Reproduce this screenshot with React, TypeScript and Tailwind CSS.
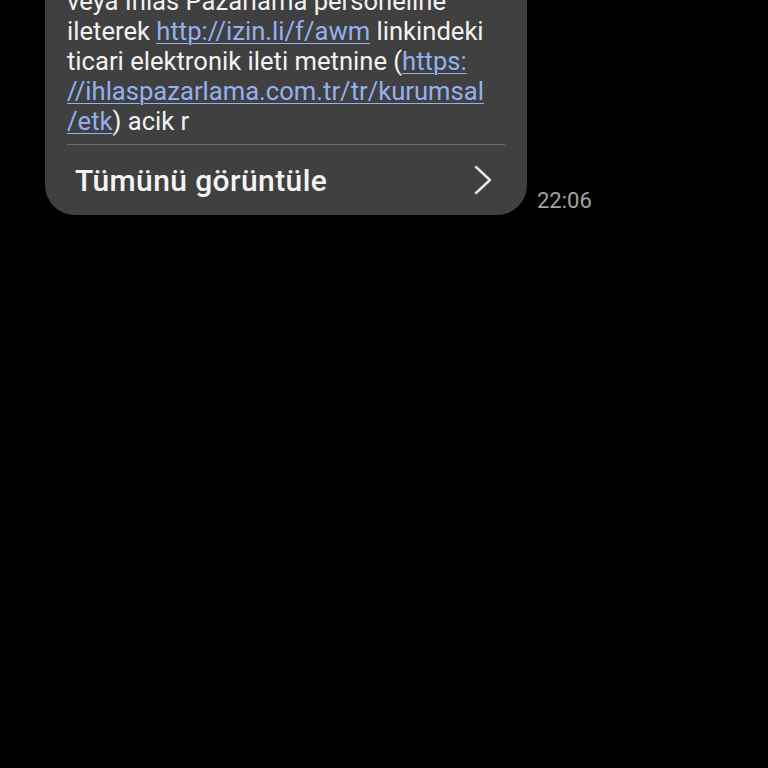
const link = 'text-[#93b1ee] underline decoration-1 underline-offset-[3px]'

export default function App() {
  return (
    <div className="h-[768px] w-[768px] overflow-hidden bg-black font-['Roboto',sans-serif]">
      <div className="flex items-end">
        <div className="-mt-[28px] ml-[45px] w-[482px] rounded-[30px] bg-[#404040] pt-[14px]">
          <p className="px-[22px] text-[25.6px] leading-[30px] text-[#f2f2f2]">
            veya İhlas Pazarlama personeline
            <br />
            ileterek <span className={link}>http://izin.li/f/awm</span> linkindeki
            <br />
            ticari elektronik ileti metnine (<span className={link}>https:</span>
            <br />
            <span className={link}>//ihlaspazarlama.com.tr/tr/kurumsal</span>
            <br />
            <span className={link}>/etk</span>) acik r
          </p>
          <div className="mx-[22px] mt-[8px] h-px bg-[#6b6b6b]" />
          <div className="flex h-[70px] items-center justify-between pl-[30px] pr-[35px]">
            <span className="text-[30px] font-medium tracking-[0.4px] text-[#f4f4f4]">Tümünü görüntüle</span>
            <svg width="18" height="30" viewBox="0 0 18 30" fill="none" className="text-[#e8e8e8]">
              <polyline points="2,2 16,15 2,28" stroke="currentColor" strokeWidth="2.4" strokeLinecap="round" strokeLinejoin="round" />
            </svg>
          </div>
        </div>
        <span className="mb-[0px] ml-[10px] text-[22px] leading-[28px] text-[#a3a3a3]">22:06</span>
      </div>
    </div>
  )
}
